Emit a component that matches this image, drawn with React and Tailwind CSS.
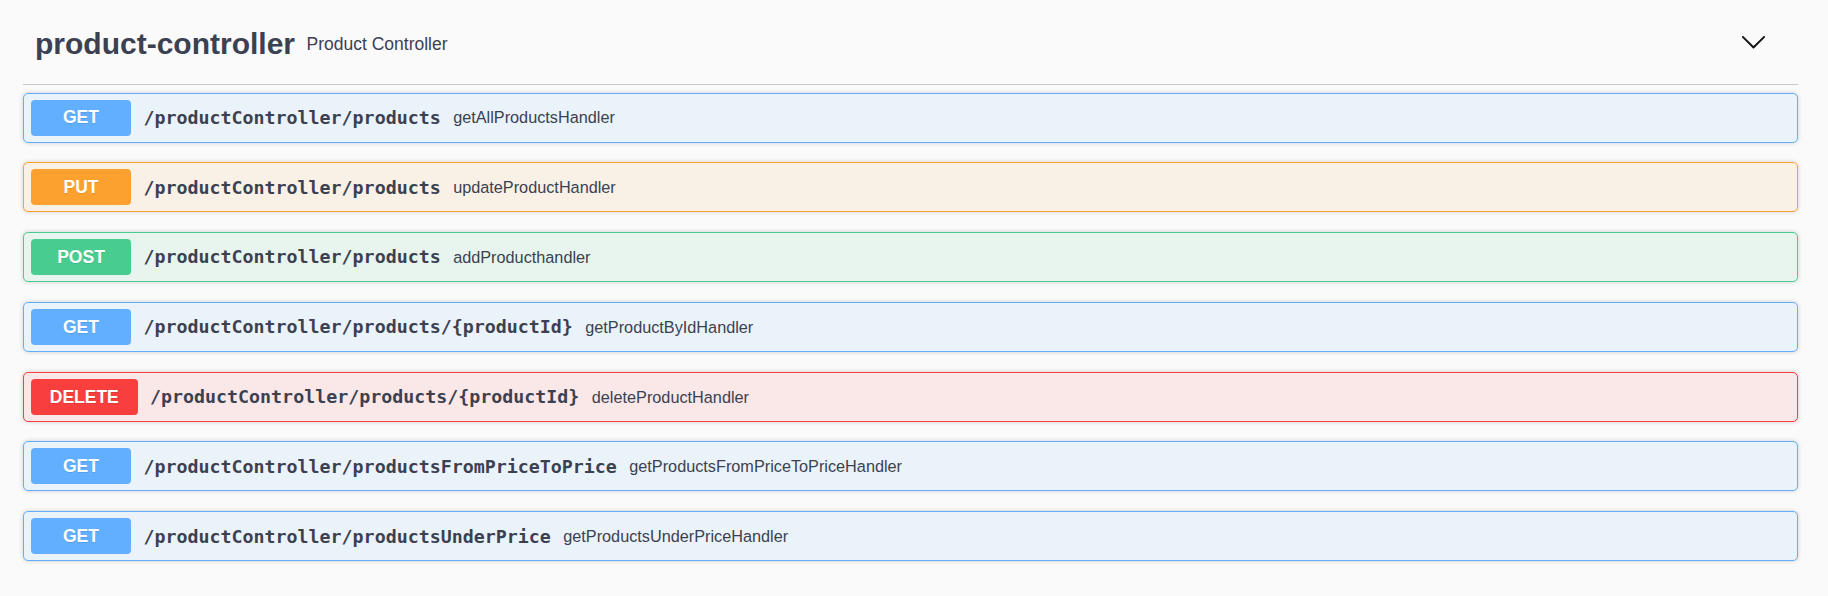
import React from 'react'

const METHOD_STYLES = {
  GET: { block: 'bg-[#ebf3fa] border-[#61affe]', badge: 'bg-[#61affe]' },
  PUT: { block: 'bg-[#faf1e6] border-[#fca130]', badge: 'bg-[#fca130]' },
  POST: { block: 'bg-[#e8f5ef] border-[#49cc90]', badge: 'bg-[#49cc90]' },
  DELETE: { block: 'bg-[#fae7e7] border-[#f93e3e]', badge: 'bg-[#f93e3e]' },
}

const OPERATIONS = [
  { method: 'GET', path: '/productController/products', summary: 'getAllProductsHandler' },
  { method: 'PUT', path: '/productController/products', summary: 'updateProductHandler' },
  { method: 'POST', path: '/productController/products', summary: 'addProducthandler' },
  { method: 'GET', path: '/productController/products/{productId}', summary: 'getProductByIdHandler' },
  { method: 'DELETE', path: '/productController/products/{productId}', summary: 'deleteProductHandler' },
  { method: 'GET', path: '/productController/productsFromPriceToPrice', summary: 'getProductsFromPriceToPriceHandler' },
  { method: 'GET', path: '/productController/productsUnderPrice', summary: 'getProductsUnderPriceHandler' },
]

function ChevronDown() {
  return (
    <svg width="27" height="27" viewBox="0 0 20 20" fill="#111">
      <path d="M17.418 6.109c.272-.268.709-.268.979 0s.271.701 0 .969l-7.908 7.83c-.27.268-.707.268-.979 0l-7.908-7.83c-.27-.268-.27-.701 0-.969.271-.268.709-.268.98 0L10 13.25l7.418-7.141z" />
    </svg>
  )
}

function Operation({ method, path, summary }) {
  const style = METHOD_STYLES[method]
  return (
    <div className={`flex items-center h-[50px] pl-[7px] border rounded-[5px] shadow-[0_0_4px_rgba(0,0,0,0.19)] ${style.block}`}>
      <span
        className={`min-w-[100px] h-[36px] px-[18.75px] flex items-center justify-center rounded-[4px] text-white font-bold text-[17.5px] [text-shadow:0_1px_0_rgba(0,0,0,0.1)] ${style.badge}`}
        style={{ fontFamily: '"Liberation Sans", Arial, sans-serif' }}
      >
        {method}
      </span>
      <span
        className="px-[12.5px] text-[18.3px] font-bold text-[#3b4151] whitespace-nowrap"
        style={{ fontFamily: '"DejaVu Sans Mono", monospace' }}
      >
        {path}
      </span>
      <span
        className="text-[16.25px] text-[#3b4151] whitespace-nowrap"
        style={{ fontFamily: '"Liberation Sans", Arial, sans-serif' }}
      >
        {summary}
      </span>
    </div>
  )
}

export default function App() {
  return (
    <div
      className="min-h-[596px] w-full bg-[#fafafa] pl-[23px] pr-[30px] pt-[21px]"
      style={{ fontFamily: '"Liberation Sans", Arial, sans-serif' }}
    >
      <div className="flex items-center h-[46px] pb-[17px] box-content border-b border-[#c8c9cc] pl-[12px] pr-[31px]">
        <h3 className="text-[30px] font-bold text-[#3b4151] leading-none">product-controller</h3>
        <small className="flex-1 pl-[11.5px] text-[17.5px] text-[#3b4151]">Product Controller</small>
        <div className="self-start mt-[7px]">
          <ChevronDown />
        </div>
      </div>
      <div className="flex flex-col gap-[19.8px] mt-[7.5px]">
        {OPERATIONS.map((op, i) => (
          <Operation key={i} {...op} />
        ))}
      </div>
    </div>
  )
}
